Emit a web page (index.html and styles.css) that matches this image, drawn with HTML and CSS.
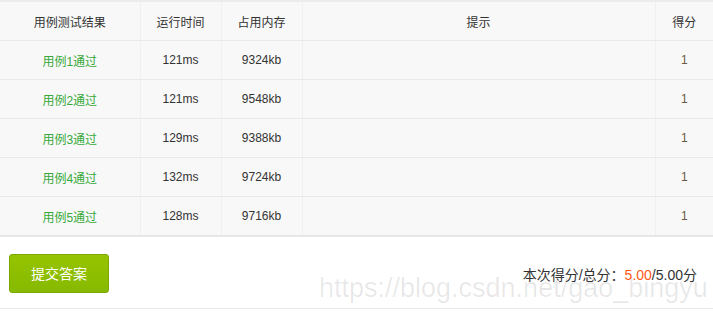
FILE: index.html
```html
<!DOCTYPE html>
<html lang="zh">
<head>
<meta charset="utf-8">
<link rel="stylesheet" href="styles.css">
</head>
<body>
<div class="panel">
  <table class="results">
    <colgroup>
      <col class="c1"><col class="c2"><col class="c3"><col class="c4"><col class="c5">
    </colgroup>
    <thead>
      <tr><th>用例测试结果</th><th>运行时间</th><th>占用内存</th><th>提示</th><th>得分</th></tr>
    </thead>
    <tbody>
      <tr><td class="pass">用例1通过</td><td>121ms</td><td>9324kb</td><td></td><td class="score">1</td></tr>
      <tr><td class="pass">用例2通过</td><td>121ms</td><td>9548kb</td><td></td><td class="score">1</td></tr>
      <tr><td class="pass">用例3通过</td><td>129ms</td><td>9388kb</td><td></td><td class="score">1</td></tr>
      <tr><td class="pass">用例4通过</td><td>132ms</td><td>9724kb</td><td></td><td class="score">1</td></tr>
      <tr><td class="pass">用例5通过</td><td>128ms</td><td>9716kb</td><td></td><td class="score">1</td></tr>
    </tbody>
  </table>
  <div class="footer">
    <button class="submit">提交答案</button>
    <div class="total">本次得分/总分：<span class="got">5.00</span>/5.00分</div>
    <div class="watermark">https://blog.csdn.net/gao_bingyu</div>
  </div>
</div>
</body>
</html>
```
FILE: styles.css
```css
html, body {
  margin: 0;
  padding: 0;
  background: #fff;
}
body {
  font-family: "Liberation Sans", Arial, "Noto Sans CJK SC", sans-serif;
  color: #333;
}
.panel {
  width: 713px;
  border-top: 2px solid #ececec;
}
.results {
  width: 713px;
  border-collapse: collapse;
  table-layout: fixed;
  background: #f8f8f8;
}
.c1 { width: 140px; }
.c2 { width: 81px; }
.c3 { width: 81px; }
.c4 { width: 353px; }
.c5 { width: 58px; }
.results th, .results td {
  height: 38px;
  padding: 0;
  text-align: center;
  font-size: 12px;
  font-weight: normal;
  color: #333;
  border-left: 1px solid #f0f0f0;
  border-bottom: 1px solid #e9e9e9;
}
.results th:first-child, .results td:first-child { border-left: none; }
.results tbody tr:last-child td { border-bottom: 2px solid #e6e6e6; }
.results td.pass { color: #36a83a; }
.results td.score { color: #6a5a40; }
.footer {
  position: relative;
  height: 72px;
  display: flex;
  align-items: center;
  justify-content: space-between;
  padding: 0 16px 0 9px;
  border-bottom: 1px solid #e8e8e8;
  box-sizing: border-box;
  width: 713px;
  overflow: hidden;
}
.submit {
  width: 100px;
  height: 39px;
  margin-top: 1px;
  border: 1px solid #7ca800;
  border-radius: 3px;
  background: linear-gradient(#96c400, #86b900);
  color: #fff;
  font-family: "Liberation Sans", Arial, "Noto Sans CJK SC", sans-serif;
  font-size: 14px;
  padding: 0;
}
.total {
  font-size: 14px;
  color: #333;
  margin-top: 3px;
  position: relative;
  z-index: 1;
}
.got { color: #ff5a14; }
.watermark {
  position: absolute;
  left: 319px;
  top: 36px;
  font-size: 27px;
  color: rgba(0,0,0,0.09);
  font-family: "Liberation Sans", Arial, sans-serif;
  white-space: nowrap;
  pointer-events: none;
}
```
